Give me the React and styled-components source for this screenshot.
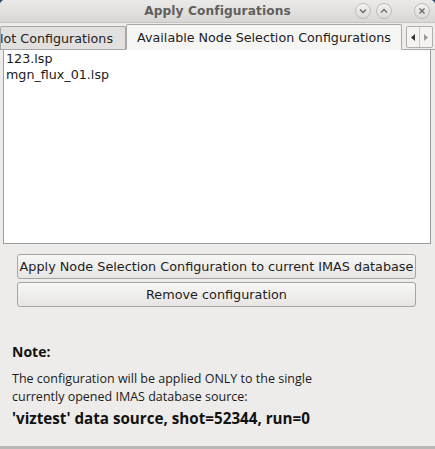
import styled, { createGlobalStyle } from 'styled-components'

const GlobalStyle = createGlobalStyle`
  html, body {
    margin: 0;
    padding: 0;
    background: #2f4a6b;
  }
  body {
    font-family: "DejaVu Sans", sans-serif;
  }
`;

const Frame = styled.div`
  width: 435px;
  height: 449px;
  box-sizing: border-box;
  background: #edeceb;
  border-radius: 5px 5px 0 0;
  border-bottom: 3px solid #b9b8b6;
  display: flex;
  flex-direction: column;
  overflow: hidden;
`;

const TitleBar = styled.div`
  height: 22px;
  flex: none;
  position: relative;
  background: linear-gradient(to bottom, #eceae8, #d9d7d5);
  border-bottom: 1px solid #c6c4c2;
  display: flex;
  align-items: center;
  justify-content: center;
`;

const Title = styled.div`
  font-family: "DejaVu Sans", sans-serif;
  font-weight: bold;
  font-size: 12.2px;
  color: #5f5f5f;
  letter-spacing: 0.1px;
`;

const TitleButtons = styled.div`
  position: absolute;
  top: 3px;
  right: 5px;
  display: flex;
  gap: 5px;
`;

const RoundButton = styled.div`
  width: 16px;
  height: 16px;
  box-sizing: border-box;
  border-radius: 50%;
  border: 1px solid #bdbbb9;
  background: linear-gradient(to bottom, #f4f3f2, #dcdad8);
  display: flex;
  align-items: center;
  justify-content: center;
  margin-left: ${p => p.$gap || 0}px;
`;

const TabRow = styled.div`
  height: 26px;
  flex: none;
  display: flex;
  align-items: flex-end;
  border-bottom: 1px solid #a8a7a5;
`;

const Tab = styled.div`
  box-sizing: border-box;
  height: ${p => (p.$active ? 26 : 23)}px;
  width: ${p => p.$width}px;
  flex: none;
  margin-bottom: ${p => (p.$active ? -1 : 0)}px;
  background: ${p => (p.$active ? '#f5f5f4' : '#e2e0de')};
  border: 1px solid #a8a7a5;
  border-bottom: ${p => (p.$active ? '1px solid #f5f5f4' : 'none')};
  border-radius: 2px 2px 0 0;
  font-size: 12.7px;
  color: #222;
  display: flex;
  align-items: center;
  justify-content: ${p => (p.$active ? 'center' : 'flex-end')};
  padding-right: ${p => (p.$active ? 0 : 12)}px;
  padding-top: 1px;
  white-space: nowrap;
  overflow: hidden;
`;

const Scroller = styled.div`
  margin-left: 4px;
  margin-bottom: 1px;
  height: 22px;
  display: flex;
  box-sizing: border-box;
  border: 1px solid #b0afad;
  border-radius: 2px;
  background: #f4f3f2;
`;

const ScrollHalf = styled.div`
  width: 12px;
  display: flex;
  align-items: center;
  justify-content: center;
  border-left: ${p => (p.$right ? '1px solid #c8c7c5' : 'none')};
`;

const ListBox = styled.div`
  margin: 0 4px 0 3px;
  height: 194px;
  flex: none;
  background: #ffffff;
  border: 1px solid #9e9d9b;
  border-top: none;
  padding: 1px 2px;
  box-sizing: border-box;
`;

const ListItem = styled.div`
  font-size: 12.7px;
  line-height: 16px;
  color: #1a1a1a;
`;

const ButtonStack = styled.div`
  display: flex;
  flex-direction: column;
  gap: 3px;
  padding: 10px 19px 0 17px;
`;

const PushButton = styled.div`
  height: 25px;
  box-sizing: border-box;
  border: 1px solid #a6a5a3;
  border-radius: 3px;
  background: linear-gradient(to bottom, #f7f7f6, #e6e5e4);
  font-size: 12.8px;
  color: #1e1e1e;
  display: flex;
  align-items: center;
  justify-content: center;
  white-space: nowrap;
`;

const Note = styled.div`
  padding: 35px 12px 0 12px;
  font-family: "Open Sans", sans-serif;
  color: #111;
`;

const NoteHead = styled.div`
  font-weight: bold;
  font-size: 14px;
  margin-bottom: 9px;
`;

const NoteText = styled.div`
  font-size: 12.5px;
  line-height: 18px;
  color: #1a1a1a;
`;

const NoteSource = styled.div`
  font-weight: bold;
  font-size: 15.2px;
  margin-top: 2px;
`;

const Chevron = ({ up }) => (
  <svg width="8" height="6" viewBox="0 0 8 6">
    <path
      d={up ? 'M1 4.5 L4 1.5 L7 4.5' : 'M1 1.5 L4 4.5 L7 1.5'}
      fill="none"
      stroke="#6a6a6a"
      strokeWidth="1.4"
    />
  </svg>
);

const Cross = () => (
  <svg width="8" height="8" viewBox="0 0 8 8">
    <path d="M1.5 1.5 L6.5 6.5 M6.5 1.5 L1.5 6.5" stroke="#6a6a6a" strokeWidth="1.4" />
  </svg>
);

const Arrow = ({ right }) => (
  <svg width="4" height="7" viewBox="0 0 4 7">
    <path d={right ? 'M0 0 L4 3.5 L0 7 Z' : 'M4 0 L0 3.5 L4 7 Z'} fill={right ? '#9a9a9a' : '#333'} />
  </svg>
);

const App = () => (
  <>
    <GlobalStyle />
    <Frame>
      <TitleBar>
        <Title>Apply Configurations</Title>
        <TitleButtons>
          <RoundButton><Chevron /></RoundButton>
          <RoundButton><Chevron up /></RoundButton>
          <RoundButton $gap={17}><Cross /></RoundButton>
        </TitleButtons>
      </TitleBar>
      <TabRow>
        <Tab $width={126}>Plot Configurations</Tab>
        <Tab $active $width={276}>Available Node Selection Configurations</Tab>
        <Scroller>
          <ScrollHalf><Arrow /></ScrollHalf>
          <ScrollHalf $right><Arrow right /></ScrollHalf>
        </Scroller>
      </TabRow>
      <ListBox>
        <ListItem>123.lsp</ListItem>
        <ListItem>mgn_flux_01.lsp</ListItem>
      </ListBox>
      <ButtonStack>
        <PushButton>Apply Node Selection Configuration to current IMAS database</PushButton>
        <PushButton>Remove configuration</PushButton>
      </ButtonStack>
      <Note>
        <NoteHead>Note:</NoteHead>
        <NoteText>
          The configuration will be applied ONLY to the single<br />
          currently opened IMAS database source:
        </NoteText>
        <NoteSource>'viztest' data source, shot=52344, run=0</NoteSource>
      </Note>
    </Frame>
  </>
)

export default App
